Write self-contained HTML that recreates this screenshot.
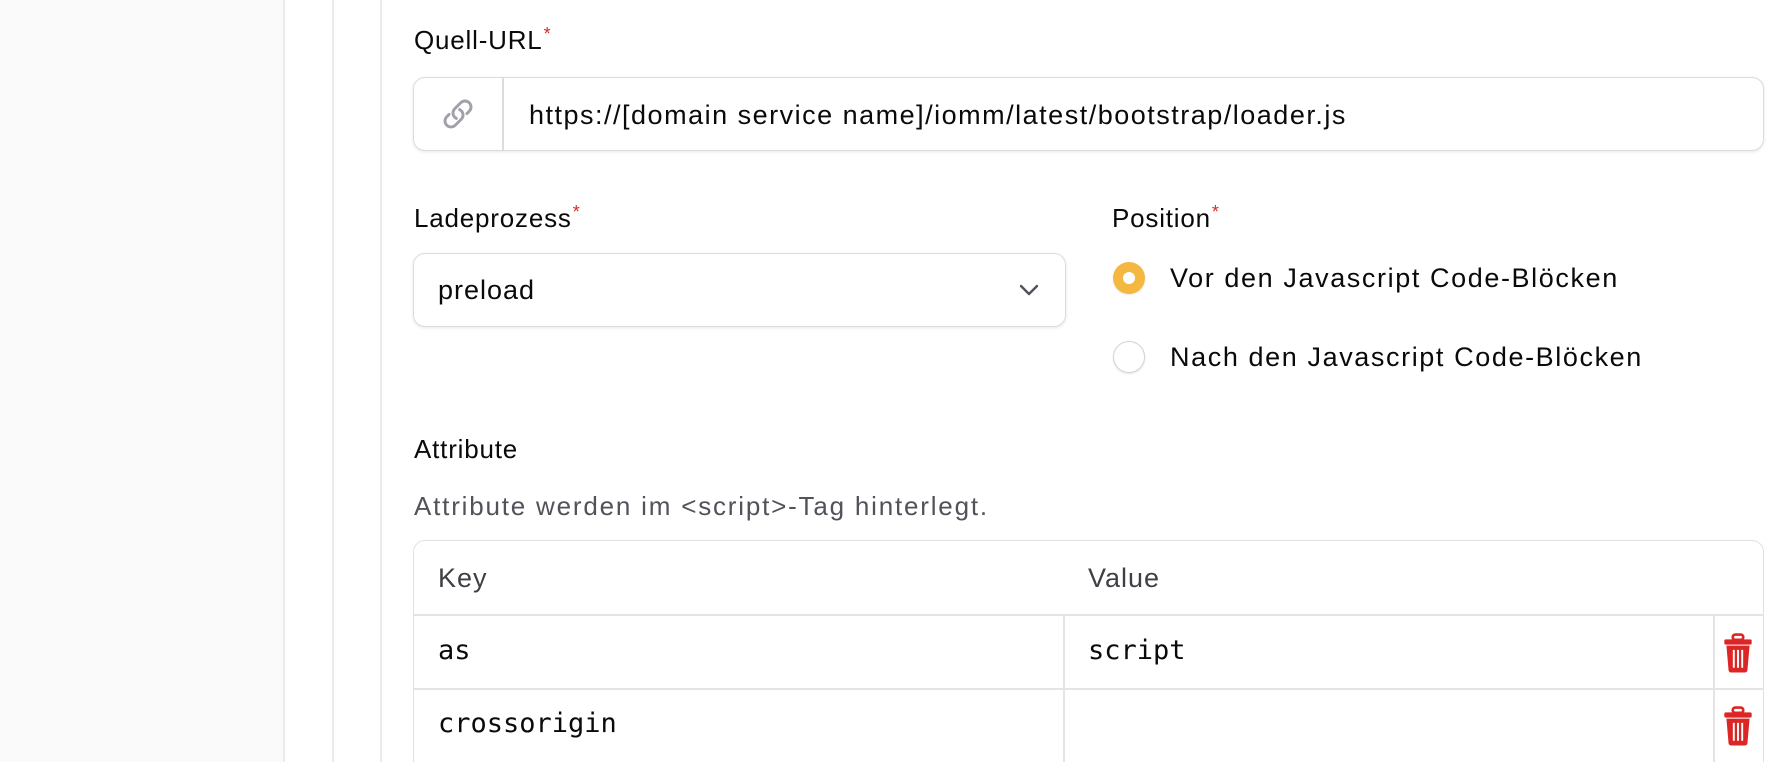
<!DOCTYPE html>
<html style="width:1780px;height:762px;overflow:hidden"><head><meta charset="utf-8"><style>
*{box-sizing:border-box;margin:0;padding:0}
body{width:1780px;height:762px;overflow:hidden;background:#fff;font-family:"Liberation Sans",sans-serif;color:#0a0a0a;position:relative}
.abs{position:absolute}
.lbl{font-size:26px;line-height:30px;letter-spacing:0.8px}
.req{color:#dc2626;font-size:18px;vertical-align:top;position:relative;top:-6px;margin-left:1px}
.box{border:1.5px solid #dcdcdc;border-radius:12px;box-shadow:0 1px 3px rgba(0,0,0,.1);background:#fff}
.mono{font-family:"DejaVu Sans Mono","Liberation Mono",monospace;font-size:27px}
.txt{font-size:27px;line-height:30px;letter-spacing:1.4px}
</style></head><body>
<div class="abs" style="left:0;top:0;width:285px;height:762px;background:#fafafa;border-right:2px solid #ebebeb"></div>
<div class="abs" style="left:332px;top:0;width:2px;height:762px;background:#ebebeb"></div>
<div class="abs" style="left:380px;top:0;width:2px;height:762px;background:#ebebeb"></div>

<div class="abs lbl" style="left:414px;top:25px">Quell-URL<span class="req">*</span></div>
<div class="abs box" style="left:413px;top:77px;width:1351px;height:74px"></div>
<div class="abs" style="left:502px;top:78px;width:1.5px;height:72px;background:#dcdcdc"></div>
<svg class="abs" style="left:442px;top:98px" width="32" height="32" viewBox="0 0 24 24" fill="none" stroke="#a1a1aa" stroke-width="2.2" stroke-linecap="round" stroke-linejoin="round"><path d="M13.19 8.688a4.5 4.5 0 011.242 7.244l-4.5 4.5a4.5 4.5 0 01-6.364-6.364l1.757-1.757m13.35-.622l1.757-1.757a4.5 4.5 0 00-6.364-6.364l-4.5 4.5a4.5 4.5 0 001.242 7.244"/></svg>
<div class="abs txt" style="left:529px;top:100px;letter-spacing:1.5px">https://[domain service name]/iomm/latest/bootstrap/loader.js</div>

<div class="abs lbl" style="left:414px;top:203px">Ladeprozess<span class="req">*</span></div>
<div class="abs box" style="left:413px;top:253px;width:653px;height:74px"></div>
<div class="abs txt" style="left:438px;top:275px;letter-spacing:1px">preload</div>
<svg class="abs" style="left:1018px;top:283px" width="22" height="14" viewBox="0 0 22 14" fill="none" stroke="#52525b" stroke-width="2.4" stroke-linecap="round" stroke-linejoin="round"><path d="M3 3l8 8 8-8"/></svg>

<div class="abs lbl" style="left:1112px;top:203px">Position<span class="req">*</span></div>
<div class="abs" style="left:1113px;top:262px;width:32px;height:32px;border-radius:50%;background:#f4b73f;box-shadow:0 1px 2px rgba(0,0,0,.1)"></div>
<div class="abs" style="left:1123px;top:272px;width:12px;height:12px;border-radius:50%;background:#fff"></div>
<div class="abs txt" style="left:1170px;top:263px;letter-spacing:1.6px">Vor den Javascript Code-Blöcken</div>
<div class="abs" style="left:1113px;top:341px;width:32px;height:32px;border-radius:50%;background:#fff;border:1.5px solid #d4d4d4;box-shadow:0 1px 2px rgba(0,0,0,.1)"></div>
<div class="abs txt" style="left:1170px;top:342px;letter-spacing:1.6px">Nach den Javascript Code-Blöcken</div>

<div class="abs lbl" style="left:414px;top:434px">Attribute</div>
<div class="abs" style="left:414px;top:491px;font-size:26px;line-height:30px;letter-spacing:1.8px;color:#52525b">Attribute werden im &lt;script&gt;-Tag hinterlegt.</div>

<div class="abs" style="left:413px;top:540px;width:1351px;height:240px;border:1.5px solid #e0e0e0;border-radius:12px"></div>
<div class="abs" style="left:414px;top:614px;width:1349px;height:2px;background:#e4e4e4"></div>
<div class="abs" style="left:414px;top:688px;width:1349px;height:2px;background:#e4e4e4"></div>
<div class="abs" style="left:1063px;top:615px;width:2px;height:147px;background:#e4e4e4"></div>
<div class="abs" style="left:1713px;top:615px;width:2px;height:147px;background:#e4e4e4"></div>
<div class="abs txt" style="left:438px;top:563px;color:#3f3f46;letter-spacing:1px">Key</div>
<div class="abs txt" style="left:1088px;top:563px;color:#3f3f46;letter-spacing:1px">Value</div>
<div class="abs mono" style="left:438px;top:636px;line-height:30px">as</div>
<div class="abs mono" style="left:1088px;top:636px;line-height:30px">script</div>
<div class="abs mono" style="left:438px;top:709px;line-height:30px">crossorigin</div>
<svg class="abs" style="left:1723px;top:633px" width="30" height="40" viewBox="0 0 28 38"><rect x="9" y="1.5" width="10" height="5" rx="2.5" fill="none" stroke="#dc2626" stroke-width="2.5"/><rect x="1" y="6" width="26" height="5" rx="1.5" fill="#dc2626"/><path d="M3 12h22l-2 23a2.5 2.5 0 01-2.5 2.5h-13A2.5 2.5 0 015 35z" fill="#dc2626"/><path d="M10 16v17M14 16v17M18 16v17" stroke="#fff" stroke-width="1.8"/></svg>
<svg class="abs" style="left:1723px;top:706px" width="30" height="40" viewBox="0 0 28 38"><rect x="9" y="1.5" width="10" height="5" rx="2.5" fill="none" stroke="#dc2626" stroke-width="2.5"/><rect x="1" y="6" width="26" height="5" rx="1.5" fill="#dc2626"/><path d="M3 12h22l-2 23a2.5 2.5 0 01-2.5 2.5h-13A2.5 2.5 0 015 35z" fill="#dc2626"/><path d="M10 16v17M14 16v17M18 16v17" stroke="#fff" stroke-width="1.8"/></svg>
</body></html>
